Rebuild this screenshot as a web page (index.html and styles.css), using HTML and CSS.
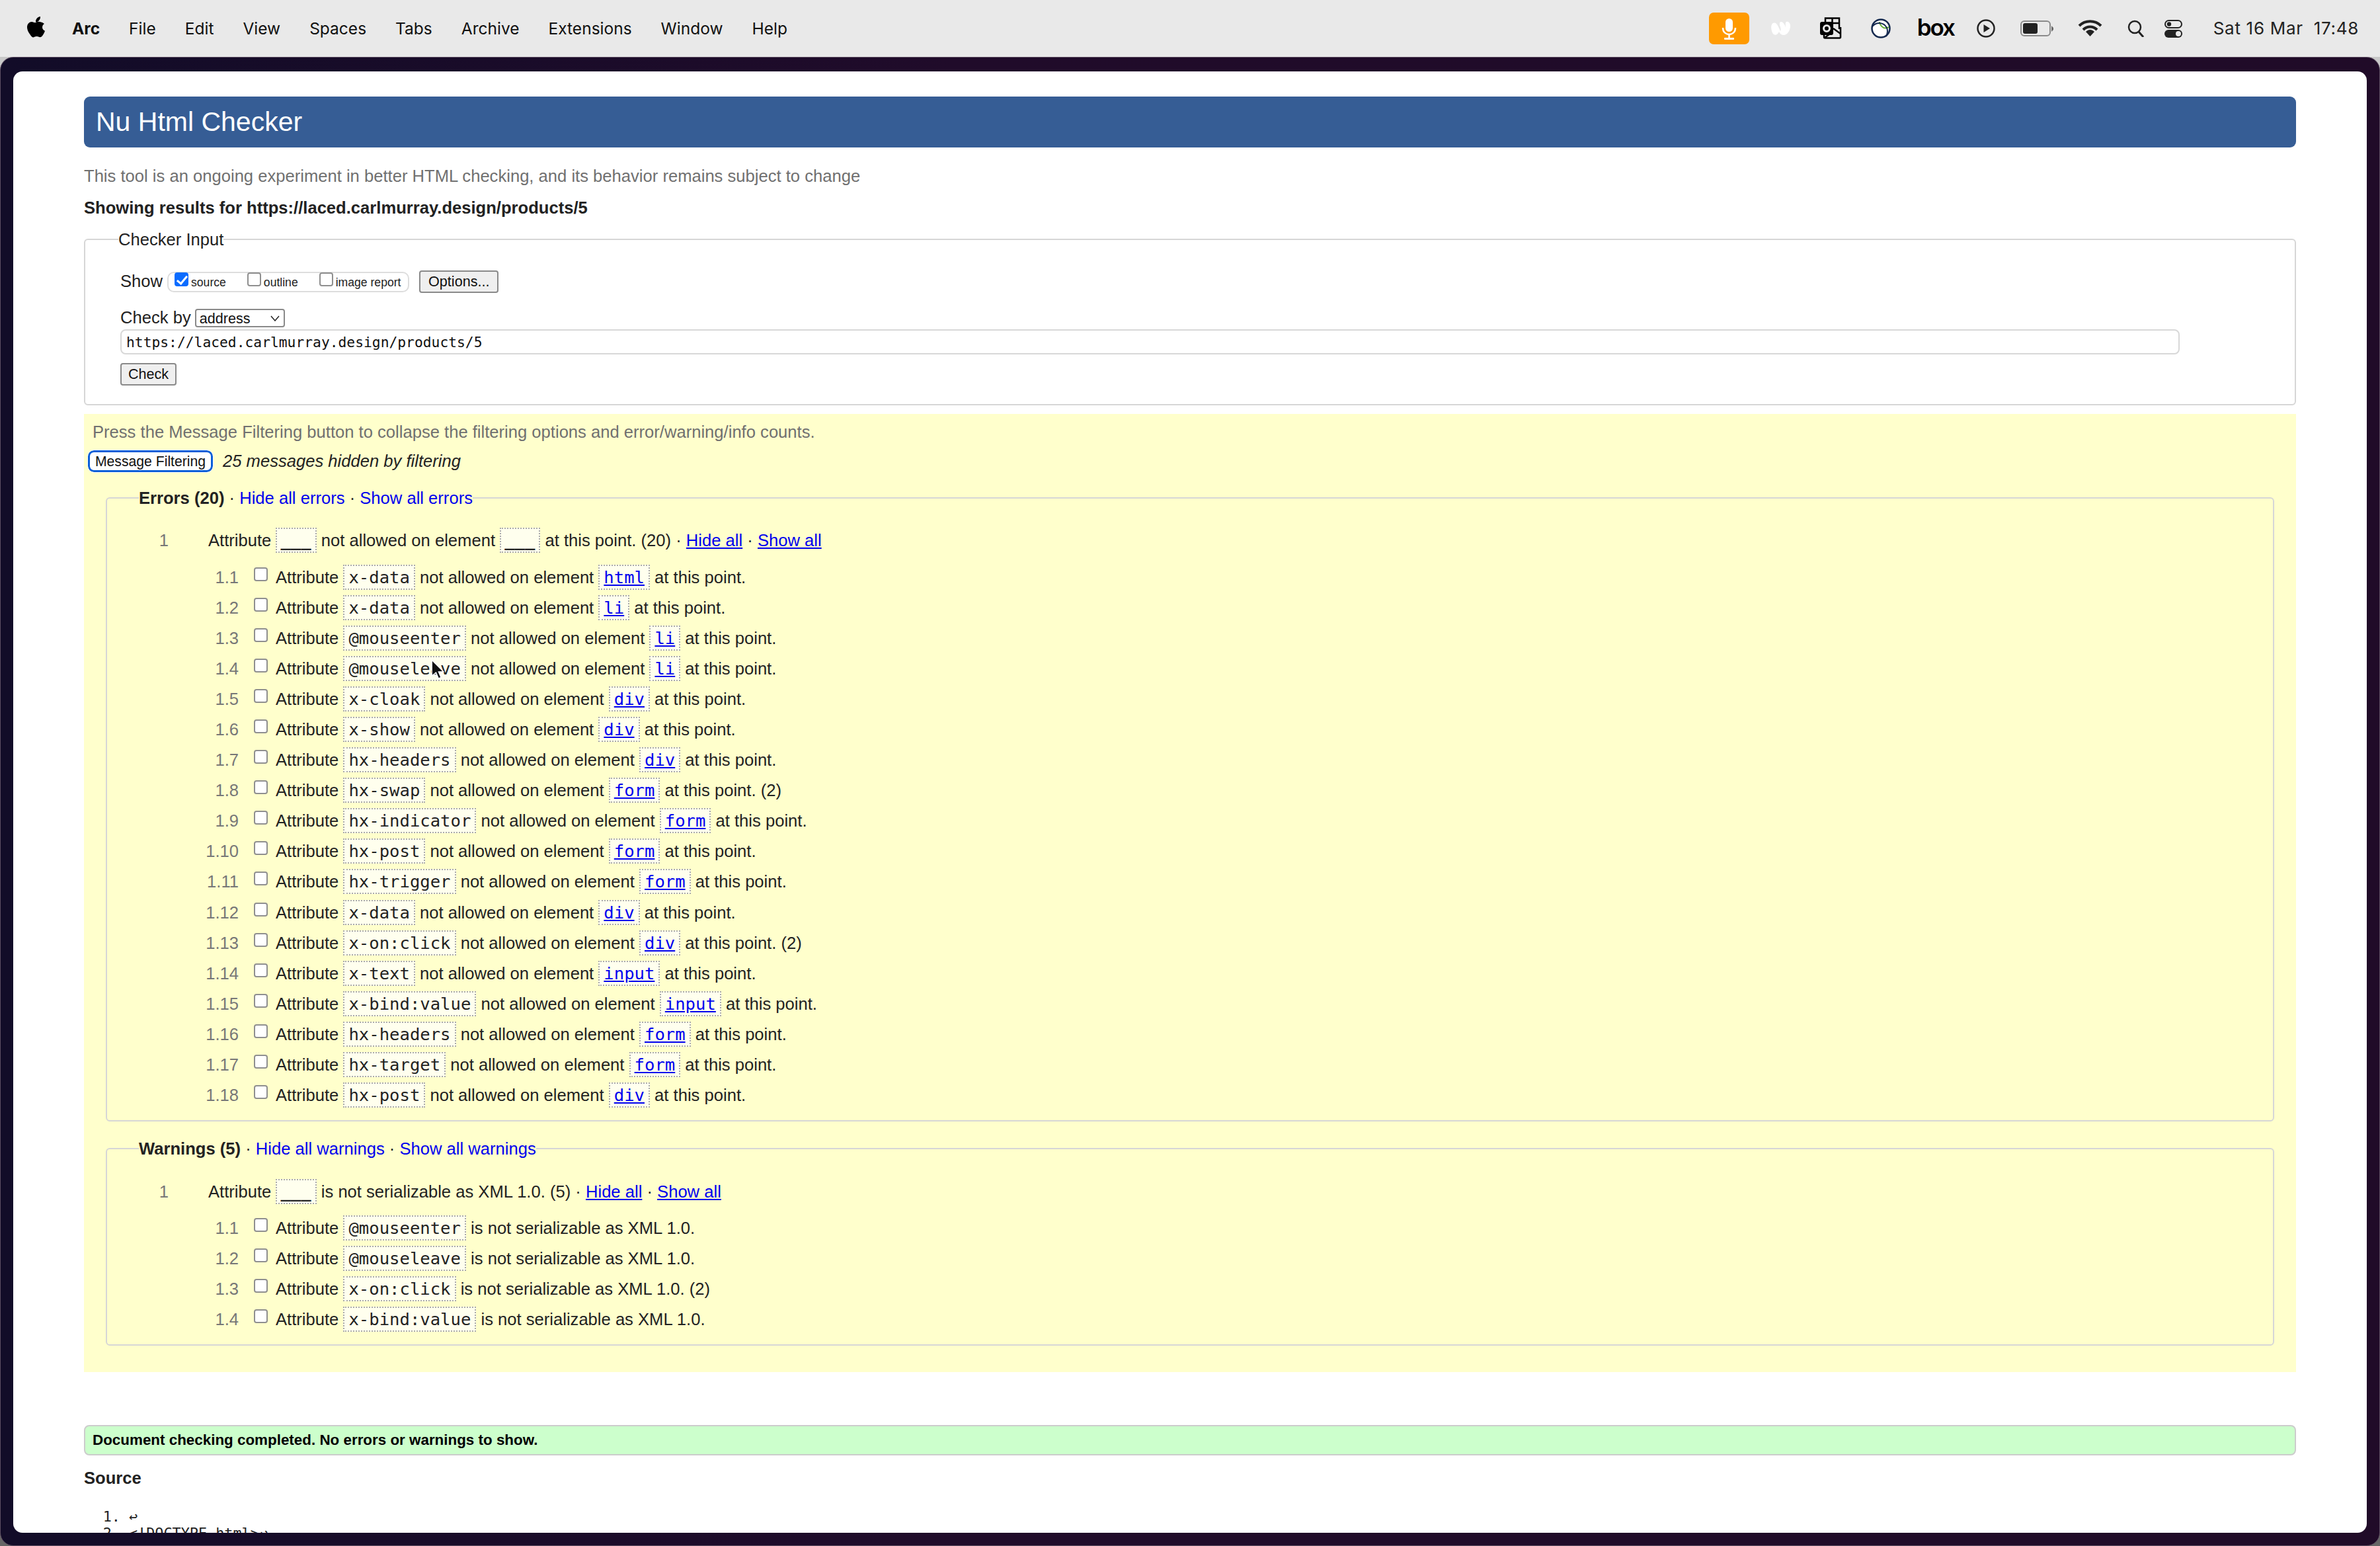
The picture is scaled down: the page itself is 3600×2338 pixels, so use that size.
FILE: index.html
```html
<!DOCTYPE html>
<html lang="en">

<head>
  <meta charset="UTF-8" />
  <title>Nu Html Checker</title>
  <link rel="stylesheet" href="styles.css">
</head>

<body>
  <header class="menubar">
    <svg class="apple" viewBox="0 0 27 32"><path d="M20 0c.3 2.600-.8 4.600-2 6-1.300 1.500-3.200 2.500-5 2.300-.3-2.200.8-4.400 2-5.800C16.300 1.100 18.400.1 20 0zM26 11c-2 1.300-3 3-3 5.200 0 2.600 1.500 4.500 4 5.500-.7 2-1.600 3.900-2.800 5.700-1.300 1.900-2.700 3.900-4.700 3.900-2 0-2.600-1.200-5-1.200s-3.100 1.200-5 1.300c-2 0-3.500-2-4.800-4C1.600 23.800 0 19.600 0 16.300c0-5.500 3.500-8.300 7-8.400 2 0 3.700 1.300 5 1.300 1.200 0 3.200-1.500 5.500-1.400 1.700 0 5.300.6 8.500 3.200z"/></svg>
    <nav class="menus">
      <span class="app-name">Arc</span>
      <span>File</span>
      <span>Edit</span>
      <span>View</span>
      <span>Spaces</span>
      <span>Tabs</span>
      <span>Archive</span>
      <span>Extensions</span>
      <span>Window</span>
      <span>Help</span>
    </nav>
    <div class="tray">
      <span class="mic">
        <svg viewBox="0 0 61 48" width="61" height="48"><rect x="25" y="9" width="11" height="20" rx="5.500" fill="#fff"/><path d="M21 23c0 6 4 10 9.500 10S40 29 40 23" fill="none" stroke="#fff" stroke-width="2.500"/><path d="M30.500 33v6" stroke="#fff" stroke-width="2.500"/><rect x="23" y="38" width="15" height="3" rx="1" fill="#fff"/></svg>
      </span>
      <svg class="t-wave" viewBox="0 0 31 22" width="31" height="22"><path d="M2 5c-2 4 0 13 3 15 3 2 6 0 8-4 1 3 4 5 7 5 5 0 10-6 10-14 0-4-3-7-6-6-2 1-1 6-1 9-1-5-4-9-7-9-2 0-3 3-1 8 1 3 1 5 0 6-2-4-4-10-7-12-3-1-5 0-6 2z" fill="#fff"/></svg>
      <svg class="t-outlook" viewBox="0 0 33 33" width="33" height="33"><path d="M8 8V1.500h21V18M18.500 1.500V16M8 9h21" fill="none" stroke="#000" stroke-width="2.500"/><path d="M6 18v12c0 1 .5 1.500 1.500 1.500h22c1 0 1.500-.5 1.500-1.500V15" fill="none" stroke="#000" stroke-width="2.500"/><path d="M20 17l11 8M7 31l11-8" fill="none" stroke="#000" stroke-width="2.500"/><rect x="0" y="7" width="20" height="20" rx="3" fill="#000"/><circle cx="10" cy="17" r="4.500" fill="none" stroke="#e9e9e9" stroke-width="3"/></svg>
      <svg class="t-globe" viewBox="0 0 30 30" width="30" height="30"><circle cx="15" cy="15" r="13.500" fill="#fff" stroke="#14294f" stroke-width="2.500"/><path d="M13 5c0 4 3 7 6 9 3 1 6 0 8-1" fill="none" stroke="#6cb33f" stroke-width="2"/><path d="M2 12C8 5 19 5 24 14c2 5 1 9-1 13" fill="none" stroke="#14294f" stroke-width="2"/></svg>
      <span class="t-box">box</span>
      <svg class="t-play" viewBox="0 0 28 28" width="28" height="28"><circle cx="14" cy="14" r="12.500" fill="none" stroke="#222" stroke-width="2.500"/><path d="M10.500 8l9.500 6-9.500 6z" fill="#222"/></svg>
      <svg class="t-battery" viewBox="0 0 50 24" width="50" height="24"><rect x="1" y="1" width="44" height="22" rx="5" fill="none" stroke="#8a8a8a" stroke-width="2"/><rect x="4" y="4" width="22" height="16" rx="3" fill="#222"/><path d="M47 8l3 3v3l-3 3z" fill="#6a6a6a"/></svg>
      <svg class="t-wifi" viewBox="0 0 37 25" width="37" height="25"><path d="M2 9c9-9 24-9 33 0M8 15c6-6 15-6 21 0" fill="none" stroke="#222" stroke-width="4"/><path d="M12 18c4-4 9-4 13 0l-6.500 7z" fill="#222"/></svg>
      <svg class="t-search" viewBox="0 0 26 26" width="26" height="26"><circle cx="11" cy="11" r="9" fill="none" stroke="#222" stroke-width="2.500"/><path d="M17 18l7 8" stroke="#222" stroke-width="3"/></svg>
      <svg class="t-control" viewBox="0 0 27 27" width="27" height="27"><rect x="1" y="1" width="25" height="11" rx="5.500" fill="none" stroke="#222" stroke-width="2"/><circle cx="7" cy="6.500" r="3.200" fill="#222"/><rect x="0" y="15" width="27" height="12" rx="6" fill="#222"/><circle cx="21" cy="21" r="4" fill="#e9e9e9"/></svg>
      <span class="clock">Sat 16 Mar&nbsp; 17:48</span>
    </div>
  </header>

  <div class="window">
    <main class="page">
      <h1 class="title">Nu Html Checker</h1>
      <p class="intro">This tool is an ongoing experiment in better HTML checking, and its behavior remains subject to change</p>
      <p class="showing">Showing results for https://laced.carlmurray.design/products/5</p>

      <fieldset class="checker">
        <legend>Checker Input</legend>
        <div class="show-row">
          <span class="show-label">Show</span>
          <span class="show-box">
            <label><input type="checkbox" class="check" checked>source</label>
            <label><input type="checkbox" class="check">outline</label>
            <label><input type="checkbox" class="check">image report</label>
          </span>
          <button type="button" class="btn">Options...</button>
        </div>
        <div class="by-row">
          <span class="show-label">Check by</span>
          <span class="select-wrap">
            <select>
              <option>address</option>
            </select>
            <svg viewBox="0 0 14 9" width="14" height="9"><path d="M1 1l6 7 6-7" fill="none" stroke="#222" stroke-width="1.500"/></svg>
          </span>
        </div>
        <input type="text" class="url" value="https://laced.carlmurray.design/products/5">
        <button type="button" class="btn btn-check">Check</button>
      </fieldset>

      <section class="results">
        <p class="press">Press the Message Filtering button to collapse the filtering options and error/warning/info counts.</p>
        <div class="filter-row">
          <button type="button" class="btn-filter">Message Filtering</button>
          <em>25 messages hidden by filtering</em>
        </div>

        <fieldset class="group">
          <legend><b>Errors (20)</b> · <a href="#">Hide all errors</a> · <a href="#">Show all errors</a></legend>
          <div class="head-row">
            <span class="num">1</span>
            <span class="text">Attribute <code class="blank">___</code> not allowed on element <code class="blank">___</code> at this point. (20) · <a href="#" class="ul">Hide all</a> · <a href="#" class="ul">Show all</a></span>
          </div>
          <ol class="rows">
            <li class="row"><span class="sub">1.1</span><input type="checkbox" class="check"><span class="text">Attribute <code>x-data</code> not allowed on element <code><a href="#" class="ul">html</a></code> at this point.</span></li>
            <li class="row"><span class="sub">1.2</span><input type="checkbox" class="check"><span class="text">Attribute <code>x-data</code> not allowed on element <code><a href="#" class="ul">li</a></code> at this point.</span></li>
            <li class="row"><span class="sub">1.3</span><input type="checkbox" class="check"><span class="text">Attribute <code>@mouseenter</code> not allowed on element <code><a href="#" class="ul">li</a></code> at this point.</span></li>
            <li class="row"><span class="sub">1.4</span><input type="checkbox" class="check"><span class="text">Attribute <code>@mouseleave</code> not allowed on element <code><a href="#" class="ul">li</a></code> at this point.</span></li>
            <li class="row"><span class="sub">1.5</span><input type="checkbox" class="check"><span class="text">Attribute <code>x-cloak</code> not allowed on element <code><a href="#" class="ul">div</a></code> at this point.</span></li>
            <li class="row"><span class="sub">1.6</span><input type="checkbox" class="check"><span class="text">Attribute <code>x-show</code> not allowed on element <code><a href="#" class="ul">div</a></code> at this point.</span></li>
            <li class="row"><span class="sub">1.7</span><input type="checkbox" class="check"><span class="text">Attribute <code>hx-headers</code> not allowed on element <code><a href="#" class="ul">div</a></code> at this point.</span></li>
            <li class="row"><span class="sub">1.8</span><input type="checkbox" class="check"><span class="text">Attribute <code>hx-swap</code> not allowed on element <code><a href="#" class="ul">form</a></code> at this point. (2)</span></li>
            <li class="row"><span class="sub">1.9</span><input type="checkbox" class="check"><span class="text">Attribute <code>hx-indicator</code> not allowed on element <code><a href="#" class="ul">form</a></code> at this point.</span></li>
            <li class="row"><span class="sub">1.10</span><input type="checkbox" class="check"><span class="text">Attribute <code>hx-post</code> not allowed on element <code><a href="#" class="ul">form</a></code> at this point.</span></li>
            <li class="row"><span class="sub">1.11</span><input type="checkbox" class="check"><span class="text">Attribute <code>hx-trigger</code> not allowed on element <code><a href="#" class="ul">form</a></code> at this point.</span></li>
            <li class="row"><span class="sub">1.12</span><input type="checkbox" class="check"><span class="text">Attribute <code>x-data</code> not allowed on element <code><a href="#" class="ul">div</a></code> at this point.</span></li>
            <li class="row"><span class="sub">1.13</span><input type="checkbox" class="check"><span class="text">Attribute <code>x-on:click</code> not allowed on element <code><a href="#" class="ul">div</a></code> at this point. (2)</span></li>
            <li class="row"><span class="sub">1.14</span><input type="checkbox" class="check"><span class="text">Attribute <code>x-text</code> not allowed on element <code><a href="#" class="ul">input</a></code> at this point.</span></li>
            <li class="row"><span class="sub">1.15</span><input type="checkbox" class="check"><span class="text">Attribute <code>x-bind:value</code> not allowed on element <code><a href="#" class="ul">input</a></code> at this point.</span></li>
            <li class="row"><span class="sub">1.16</span><input type="checkbox" class="check"><span class="text">Attribute <code>hx-headers</code> not allowed on element <code><a href="#" class="ul">form</a></code> at this point.</span></li>
            <li class="row"><span class="sub">1.17</span><input type="checkbox" class="check"><span class="text">Attribute <code>hx-target</code> not allowed on element <code><a href="#" class="ul">form</a></code> at this point.</span></li>
            <li class="row"><span class="sub">1.18</span><input type="checkbox" class="check"><span class="text">Attribute <code>hx-post</code> not allowed on element <code><a href="#" class="ul">div</a></code> at this point.</span></li>
          </ol>
        </fieldset>

        <fieldset class="group group-warn">
          <legend><b>Warnings (5)</b> · <a href="#">Hide all warnings</a> · <a href="#">Show all warnings</a></legend>
          <div class="head-row">
            <span class="num">1</span>
            <span class="text">Attribute <code class="blank">___</code> is not serializable as XML 1.0. (5) · <a href="#" class="ul">Hide all</a> · <a href="#" class="ul">Show all</a></span>
          </div>
          <ol class="rows">
            <li class="row"><span class="sub">1.1</span><input type="checkbox" class="check"><span class="text">Attribute <code>@mouseenter</code> is not serializable as XML 1.0.</span></li>
            <li class="row"><span class="sub">1.2</span><input type="checkbox" class="check"><span class="text">Attribute <code>@mouseleave</code> is not serializable as XML 1.0.</span></li>
            <li class="row"><span class="sub">1.3</span><input type="checkbox" class="check"><span class="text">Attribute <code>x-on:click</code> is not serializable as XML 1.0. (2)</span></li>
            <li class="row"><span class="sub">1.4</span><input type="checkbox" class="check"><span class="text">Attribute <code>x-bind:value</code> is not serializable as XML 1.0.</span></li>
          </ol>
        </fieldset>
      </section>

      <p class="done">Document checking completed. No errors or warnings to show.</p>
      <h2 class="source-title">Source</h2>
      <ol class="source">
        <li>↩</li>
        <li>&lt;!DOCTYPE html&gt;↩</li>
      </ol>

      <svg class="cursor" viewBox="0 0 16 24" width="20" height="30"><path d="M1 1v19l5-4 3 7 3-1-3-7h6z" fill="#111" stroke="#fff" stroke-width="1"/></svg>
    </main>
  </div>
</body>

</html>
```

FILE: styles.css
```css
* {
  box-sizing: border-box;
}

html,
body {
  height: 100%;
}

body {
  margin: 0;
  height: 2338px;
  overflow: hidden;
  display: flex;
  flex-direction: column;
  background: linear-gradient(#c8c8c8 200px, #666 2300px);
  font-family: "Liberation Sans", Arial, sans-serif;
  font-size: 25.6px;
  line-height: 30px;
  color: #222;
}

/* Menu bar */
.menubar {
  flex: none;
  height: 86px;
  display: flex;
  align-items: center;
  padding: 0 32px 0 41px;
  background: #e9e9e9;
  font-family: Inter, sans-serif;
  font-size: 24.500px;
  color: #111;
}

.apple {
  width: 27px;
  height: 32px;
  margin-top: -4px;
}

.menus {
  display: flex;
  gap: 44px;
  margin-left: 41px;
}

.app-name {
  font-weight: 700;
}

.tray {
  margin-left: auto;
  display: flex;
  align-items: center;
}

.mic {
  display: block;
  width: 61px;
  height: 48px;
  border-radius: 7px;
  background: #ff9a00;
  margin-top: -1px;
}

.mic svg {
  display: block;
}

.t-wave {
  margin-left: 32px;
  margin-top: -1px;
}

.t-outlook {
  margin-left: 44px;
  margin-top: -1px;
}

.t-globe {
  margin-left: 44px;
  margin-top: -1px;
}

.t-box {
  margin-left: 40px;
  width: 54px;
  font-family: Inter, sans-serif;
  font-size: 35px;
  font-weight: 600;
  letter-spacing: -2px;
  line-height: 40px;
  color: #000;
  margin-top: -4px;
}

.t-play {
  margin-left: 36px;
  margin-top: -1px;
}

.t-battery {
  margin-left: 38px;
  margin-top: -1px;
}

.t-wifi {
  margin-left: 37px;
  margin-top: -1px;
}

.t-search {
  margin-left: 38px;
}

.t-control {
  margin-left: 30px;
}

.clock {
  margin-left: 47px;
  color: #222;
  font-size: 26px;
  letter-spacing: 0.7px;
  white-space: nowrap;
}

/* Arc window */
.window {
  flex: 1;
  min-height: 0;
  display: flex;
  padding: 21px 19px 19px;
  border: 1px solid #5f4f63;
  border-radius: 20px;
  background: linear-gradient(90deg, #120c28, #200b2a 40%, #200b28);
}

.page {
  position: relative;
  flex: 1;
  min-width: 0;
  overflow: hidden;
  padding: 38px 107px 0;
  border-radius: 14px;
  background: #fff;
}

.title {
  margin: 0;
  height: 77px;
  padding-left: 18px;
  border-radius: 9px;
  background: #365d95;
  color: #fff;
  font-size: 41px;
  font-weight: 400;
  line-height: 77px;
}

.intro {
  margin: 28px 0 0;
  color: #707070;
}

.showing {
  margin: 18px 0 0;
  font-weight: 700;
}

fieldset {
  min-width: 0;
  margin: 0;
  padding: 0;
  border: 2px solid #d6d6d6;
  border-radius: 6px;
}

legend {
  padding: 0;
  line-height: 30px;
}

/* Checker input */
.checker {
  height: 266px;
  margin-top: 18px;
  padding: 0 0 0 53px;
}

.checker legend {
  margin-left: -3px;
}

.show-row {
  display: flex;
  align-items: center;
  height: 34px;
  margin-top: 32px;
}

.show-label {
  margin-top: -3px;
}

.show-box {
  display: flex;
  align-items: center;
  width: 366px;
  height: 31px;
  margin-left: 7px;
  padding-left: 9px;
  border: 2px solid #ddd;
  border-radius: 10px;
  font-size: 17.600px;
}

.show-box label {
  display: flex;
  align-items: center;
  margin-right: 32px;
  padding-top: 2px;
}

.show-box label:last-child {
  margin-right: 0;
}

.show-box .check {
  margin: -9px 4px 0 0;
}

.btn {
  height: 34px;
  margin: 0 0 0 15px;
  padding: 0 12px;
  border: 2px solid #8a8a8a;
  border-radius: 4px;
  background: #efefef;
  color: #111;
  font-family: inherit;
  font-size: 21.600px;
}

.by-row {
  display: flex;
  align-items: center;
  height: 28px;
  margin-top: 24px;
  gap: 6px;
}

.select-wrap {
  position: relative;
  display: block;
  width: 136px;
  height: 28px;
}

.select-wrap svg {
  position: absolute;
  right: 8px;
  top: 10px;
}

select {
  display: block;
  width: 100%;
  height: 100%;
  padding: 0 0 0 5px;
  border: 2px solid #8a8a8a;
  border-radius: 4px;
  background: #fff;
  appearance: none;
  font-family: inherit;
  font-size: 21.600px;
  color: #111;
}

.url {
  display: block;
  width: 3115px;
  height: 38px;
  margin-top: 3px;
  padding: 0 7px;
  border: 2px solid #d8d8d8;
  border-radius: 8px;
  background: #fff;
  font-family: "DejaVu Sans Mono", monospace;
  font-size: 21.300px;
  color: #111;
}

.btn-check {
  display: block;
  margin: 13px 0 0;
  width: 85px;
  padding: 0;
}

.check {
  flex: none;
  appearance: none;
  width: 21px;
  height: 21px;
  margin: 0;
  border: 2px solid #8f8f8f;
  border-radius: 4px;
  background: #fff;
}

.check:checked {
  position: relative;
  border-color: #0a6cff;
  background: #0a6cff;
}

.check:checked::after {
  content: "";
  position: absolute;
  left: 5px;
  top: 0;
  width: 6px;
  height: 13px;
  border: solid #fff;
  border-width: 0 3px 3px 0;
  transform: rotate(40deg);
}

/* Messages */
.results {
  height: 1449px;
  margin-top: 13px;
  padding-top: 12px;
  background: #ffc;
}

.press {
  margin: 0 0 0 13px;
  color: #707070;
}

.filter-row {
  display: flex;
  align-items: center;
  gap: 15px;
  height: 31px;
  margin: 14px 0 0 6px;
}

.filter-row em {
  margin-top: -2px;
}

.btn-filter {
  width: 189px;
  height: 33px;
  padding: 0;
  border: 3px solid #0a5fd8;
  border-radius: 9px;
  outline: 1px solid #fff;
  background: #fff;
  color: #111;
  font-family: inherit;
  font-size: 21.200px;
}

.group {
  margin: 25px 33px 0;
  padding: 0;
}

.group legend {
  margin-left: 48px;
}

.group legend a {
  color: #00e;
  text-decoration: none;
}

.group-warn {
  margin-top: 26px;
}

.head-row {
  display: flex;
  align-items: center;
  height: 46px;
  margin-top: 26px;
}

.num {
  width: 93px;
  color: #777;
  text-align: right;
}

.head-row .text {
  margin-left: 60px;
}

.rows {
  list-style: none;
  margin: 10px 0 15px;
  padding: 0;
}

.group-warn .head-row {
  margin-top: 27px;
}

.group-warn .rows {
  margin-top: 9px;
}

.row {
  display: flex;
  align-items: center;
  height: 46.05px;
}

.sub {
  width: 199px;
  color: #777;
  text-align: right;
}

.row .check {
  margin: -9px 12px 0 23px;
}

.text {
  white-space: nowrap;
}

code {
  display: inline-block;
  padding: 0 6px;
  border: 2px dotted #aaa;
  background: #ffffee;
  font-family: "DejaVu Sans Mono", monospace;
  font-size: 25.600px;
  line-height: 34px;
}

.blank {
  padding: 0 6px 0 5px;
  font-weight: 700;
}

.ul {
  color: #00e;
  text-decoration: underline;
}

.done {
  margin: 80px 0 0;
  height: 46px;
  padding-left: 11px;
  border: 2px solid #ccc;
  border-radius: 8px;
  background: #cfc;
  color: #000;
  font-size: 22.400px;
  font-weight: 700;
  line-height: 42px;
}

.source-title {
  margin: 19px 0 0;
  font-size: 25.600px;
  font-weight: 700;
  line-height: 30px;
}

.source {
  margin: 31px 0 0;
  padding-left: 68px;
  font-family: "DejaVu Sans Mono", monospace;
  font-size: 21.800px;
  line-height: 25px;
}

.cursor {
  position: absolute;
  left: 632px;
  top: 889px;
}
```
